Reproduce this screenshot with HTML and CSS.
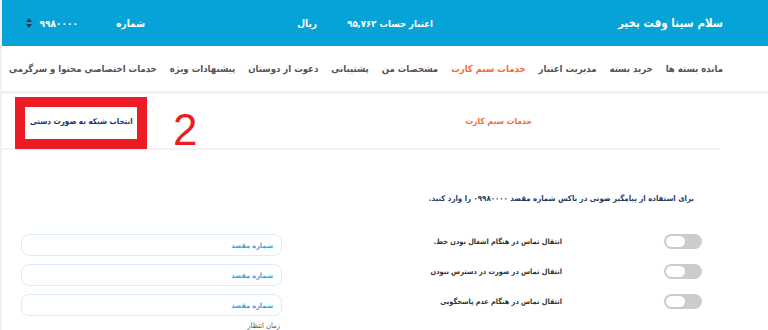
FILE: index.html
```html
<!DOCTYPE html>
<html lang="fa" dir="rtl">
<head>
<meta charset="utf-8">
<title>خدمات سیم کارت</title>
<link rel="stylesheet" href="styles.css">
</head>
<body>
<div class="page">
  <header class="topbar">
    <div class="greet">سلام سینا وقت بخیر</div>
    <div class="credit">اعتبار حساب ۹۵,۷۶۲</div>
    <div class="currency">ریال</div>
    <div class="num-label">شماره</div>
    <div class="num-select">
      <span class="num">۹۹۸۰۰۰۰</span>
      <svg class="updown" width="6" height="10" viewBox="0 0 6 10"><path d="M3 0L6 4H0Z M3 10L0 6H6Z" fill="#2b3a45"/></svg>
    </div>
  </header>
  <nav class="menu">
    <a class="item">مانده بسته ها</a>
    <a class="item">خرید بسته</a>
    <a class="item">مدیریت اعتبار</a>
    <a class="item active">خدمات سیم کارت</a>
    <a class="item">مشخصات من</a>
    <a class="item">پشتیبانی</a>
    <a class="item">دعوت از دوستان</a>
    <a class="item">پیشنهادات ویژه</a>
    <a class="item">خدمات اختصاصی محتوا و سرگرمی</a>
  </nav>
  <main class="content">
    <div class="tabs">
      <div class="tab tab-active">خدمات سیم کارت</div>
      <div class="tab tab-manual">انتخاب شبکه به صورت دستی</div>
    </div>
    <div class="panel">
      <section class="col-main">
        <p class="hint">برای استفاده از پیامگیر صوتی در باکس شماره مقصد ۰۹۹۸۰۰۰۰ را وارد کنید.</p>
        <div class="switch-row"><span class="switch"><span class="knob"></span></span><span class="switch-label">انتقال تماس در هنگام اشغال بودن خط.</span></div>
        <div class="switch-row"><span class="switch"><span class="knob"></span></span><span class="switch-label">انتقال تماس در صورت در دسترس نبودن</span></div>
        <div class="switch-row"><span class="switch"><span class="knob"></span></span><span class="switch-label">انتقال تماس در هنگام عدم پاسخگویی</span></div>
      </section>
      <section class="col-side">
        <input class="field" type="text" placeholder="شماره مقصد">
        <input class="field" type="text" placeholder="شماره مقصد">
        <input class="field" type="text" placeholder="شماره مقصد">
        <div class="wait-label">زمان انتظار</div>
      </section>
    </div>
  </main>
  <div class="annot-box"></div>
  <div class="annot-num">2</div>
</div>
</body>
</html>
```
FILE: styles.css
```css
* { box-sizing: border-box; }
html, body { margin: 0; padding: 0; }
body {
  background: #f1f1f1;
  font-family: "DejaVu Sans Condensed", "DejaVu Sans", sans-serif;
  width: 768px;
  height: 330px;
  overflow: hidden;
}
.page {
  position: relative;
  width: 766px;
  height: 330px;
  background: #ffffff;
}
.topbar {
  height: 46px;
  background: #05a3d7;
  color: #ffffff;
  display: flex;
  align-items: center;
  padding-right: 45px;
  font-weight: bold;
  white-space: nowrap;
}
.greet { font-size: 11.5px; width: 290px; flex: none; }
.credit { font-size: 9.5px; width: 116px; flex: none; }
.currency { font-size: 10px; width: 172px; flex: none; }
.num-label { font-size: 10px; width: 67px; flex: none; }
.num-select { display: flex; align-items: center; gap: 8px; flex: none; }
.num { font-size: 10px; }
.updown { display: block; }

.menu {
  height: 48px;
  display: flex;
  align-items: center;
  gap: 13px;
  padding-right: 45px;
  border-bottom: 3px solid #f0f0f0;
}
.item {
  font-size: 9.5px;
  font-weight: bold;
  color: #555555;
  white-space: nowrap;
}
.item.active { color: #f76b3c; }

.content { width: 718px; margin-right: 48px; }
.tabs {
  height: 56px;
  display: flex;
  align-items: center;
  justify-content: space-between;
  padding-right: 188px;
  padding-left: 28px;
  border-bottom: 2px solid #f2f2f2;
}
.tab { font-size: 8.5px; font-weight: bold; white-space: nowrap; }
.tab-active { color: #f76b3c; }
.tab-manual { color: #1d3562; font-size: 8px; }

.panel {
  display: grid;
  grid-template-columns: 318px 400px;
}
.col-main { padding-right: 18px; }
.hint {
  margin: 41px 8px 0 0;
  font-size: 7.8px;
  line-height: 16px;
  font-weight: bold;
  color: #1f3864;
  white-space: nowrap;
}
.switch-row {
  height: 30px;
  display: flex;
  align-items: flex-start;
  gap: 102px;
}
.hint + .switch-row { margin-top: 27px; }
.switch {
  width: 38px;
  height: 15px;
  border-radius: 8px;
  background: #cccccc;
  display: flex;
  align-items: center;
  justify-content: flex-end;
  padding: 0 2px;
  flex: none;
}
.knob {
  width: 19px;
  height: 11px;
  border-radius: 6px;
  background: #ffffff;
}
.switch-label {
  font-size: 7.3px;
  font-weight: bold;
  color: #333333;
  line-height: 15px;
  white-space: nowrap;
}

.col-side {
  padding-top: 84px;
  padding-right: 120px;
  display: flex;
  flex-direction: column;
  align-items: flex-start;
  gap: 8px;
}
.field {
  width: 261px;
  height: 22px;
  border: 1.5px solid #dcecfb;
  border-radius: 8px;
  background: #ffffff;
  padding: 0 8px;
  font-family: "DejaVu Sans Condensed", "DejaVu Sans", sans-serif;
  font-size: 7.2px;
  font-weight: bold;
  text-align: right;
  direction: rtl;
  outline: none;
}
.field::placeholder { color: #3aa7dc; opacity: 1; }
.wait-label {
  margin-top: -4px;
  margin-right: 2px;
  font-size: 7.5px;
  line-height: 12px;
  color: #555555;
  white-space: nowrap;
}

.annot-box {
  position: absolute;
  left: 13px;
  top: 97px;
  width: 132px;
  height: 52px;
  border: 10px solid #ed1c24;
}
.annot-num {
  position: absolute;
  left: 171px;
  top: 108px;
  font-family: "Liberation Sans", sans-serif;
  font-size: 44px;
  line-height: 44px;
  color: #ed1c24;
  direction: ltr;
}
```
